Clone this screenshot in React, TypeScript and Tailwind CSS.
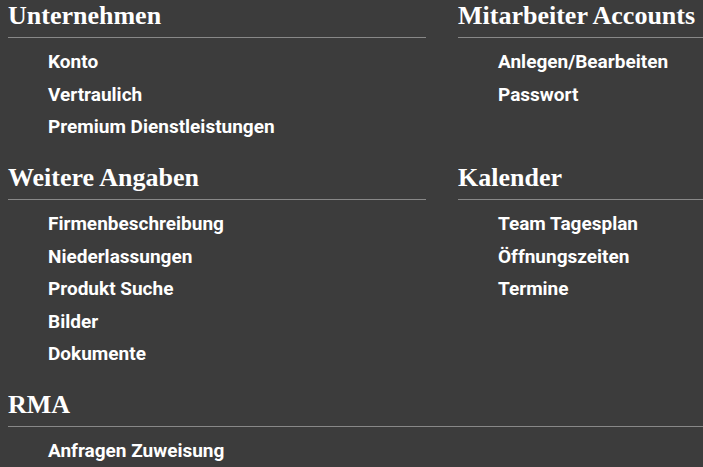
const sections: { title: string; links: string[]; wide?: boolean }[] = [
  { title: "Unternehmen", links: ["Konto", "Vertraulich", "Premium Dienstleistungen"] },
  { title: "Mitarbeiter Accounts", links: ["Anlegen/Bearbeiten", "Passwort"] },
  {
    title: "Weitere Angaben",
    links: ["Firmenbeschreibung", "Niederlassungen", "Produkt Suche", "Bilder", "Dokumente"],
  },
  { title: "Kalender", links: ["Team Tagesplan", "Öffnungszeiten", "Termine"] },
  { title: "RMA", links: ["Anfragen Zuweisung"], wide: true },
];

function Section({ title, links, wide }: { title: string; links: string[]; wide?: boolean }) {
  return (
    <div className={wide ? "col-span-2" : ""}>
      <h2 className="font-['Liberation_Serif',serif] text-[26px] leading-[30px] font-bold text-white pb-[6px] border-b border-[#888]">
        {title}
      </h2>
      <ul className="mt-2">
        {links.map((l) => (
          <li key={l} className="pl-10 font-['Roboto',sans-serif] font-bold text-[19px] leading-[32.5px] text-white">
            <a href="#">{l}</a>
          </li>
        ))}
      </ul>
    </div>
  );
}

export default function App() {
  return (
    <div className="w-full h-screen overflow-hidden bg-[#3c3c3c]">
      <div className="w-[884px] pl-2 pt-[1px] grid grid-cols-[418px_418px] gap-x-8 gap-y-[19.5px]">
        {sections.map((s) => (
          <Section key={s.title} {...s} />
        ))}
      </div>
    </div>
  );
}
